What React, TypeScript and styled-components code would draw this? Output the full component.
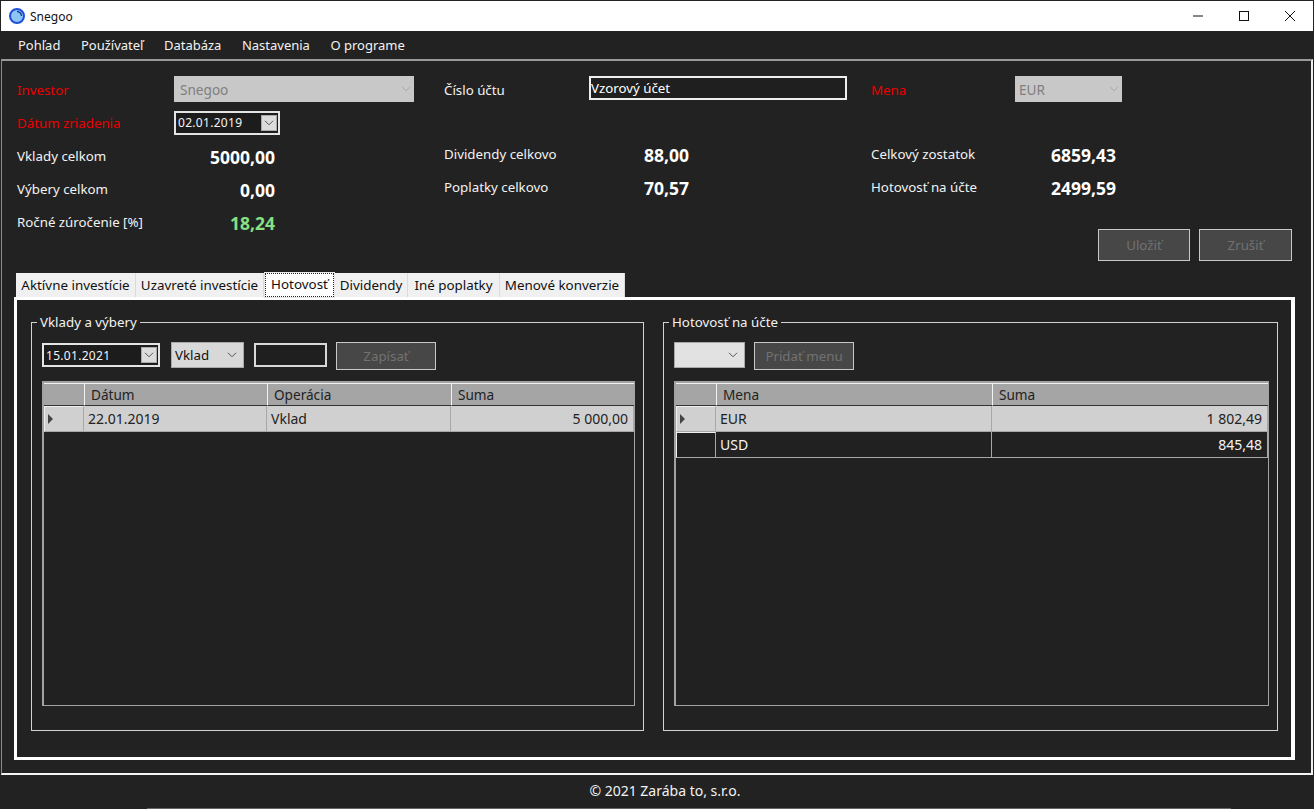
import React from "react";
import styled, { createGlobalStyle } from "styled-components";

const Global = createGlobalStyle`
  html, body { margin: 0; padding: 0; background: #222222; }
  body { font-family: "Noto Sans", "Open Sans", sans-serif; font-size: 13px; color: #f4f4f4; }
  * { box-sizing: border-box; }
`;

const Window = styled.div`
  width: 1314px; height: 809px; background: #222222; display: flex; flex-direction: column;
  padding-top: 1px; overflow: hidden; position: relative;
`;
const TitleBar = styled.div`
  height: 30px; margin: 0 1px; background: #fff; display: flex; align-items: center; flex: none;
`;
const AppIcon = styled.svg`width: 16px; height: 16px; margin-left: 8px; flex: none;`;
const AppTitle = styled.div`margin-left: 5px; font-size: 12px; color: #111; flex: 1;`;
const WinButton = styled.div`
  width: 46px; height: 30px; display: flex; align-items: center; justify-content: center; flex: none;
`;
const MenuBar = styled.div`
  height: 28px; flex: none; display: flex; align-items: center; gap: 20.5px; padding-left: 18px;
  padding-bottom: 1px;
`;
const MenuItem = styled.div`font-size: 13px; color: #f2f2f2; white-space: nowrap;`;

const Panel = styled.div`
  height: 716px; flex: none; margin: 0 1px; border-top: 2px solid #9a9a9a; border-left: 1px solid #8c8c8c;
  border-right: 2px solid #eeeeee; border-bottom: 2px solid #f4f4f4;
  padding: 12px 16px 0 0;
`;
const FormGrid = styled.div`
  display: grid; margin-left: 15px;
  grid-template-columns: 157px 270px 145px 282px 144px 107px;
  grid-auto-rows: 33px; align-items: center;
`;
const Label = styled.div<{ $red?: boolean; $up?: boolean }>`
  font-size: 13.3px; white-space: nowrap; color: ${p => (p.$red ? "#ea0000" : "#f2f2f2")};
  margin-top: ${p => (p.$up ? -3 : 0)}px;
`;
const Value = styled.div<{ $green?: boolean; $up?: boolean; $w?: number }>`
  width: ${p => p.$w ?? 101}px; text-align: right; font-size: 17.5px; font-weight: 700; line-height: 20px;
  color: ${p => (p.$green ? "#86e086" : "#ffffff")};
  margin-top: ${p => (p.$up ? -1 : 2)}px;
`;
const Spacer = styled.div``;
const DisabledSelect = styled.div<{ $w: number; $pad: number }>`
  width: ${p => p.$w}px; height: 26px; background: #c8c8c8; color: #7f7f7f; font-size: 13.6px;
  display: flex; align-items: center; justify-content: space-between; padding: 0 3px 0 ${p => p.$pad}px; margin-top: -1px;
`;
const TextBox = styled.div`
  width: 258px; height: 24px; border: 2px solid #eeeeee; background: #1f1f1f; color: #fff;
  font-size: 13.3px; line-height: 20px; padding-left: 0; margin-top: -3px;
`;
const DateBox = styled.div<{ $w: number }>`
  width: ${p => p.$w}px; height: 24px; border: 2px solid #e4e4e4; background: #1c1c1c;
  color: #f4f4f4; font-size: 12px; letter-spacing: 0.3px; display: flex; align-items: center;
  justify-content: space-between; padding: 0 1px 0 2px;
`;
const DateArrow = styled.div`
  width: 16px; height: 16px; background: #dcdcdc; display: flex; align-items: center; justify-content: center;
  border: 1px solid #aaa;
`;
const Actions = styled.div`
  display: flex; justify-content: flex-end; gap: 9px; margin: -9px 3px 0 0;
`;
const Action = styled.div<{ $w: number; $h: number }>`
  width: ${p => p.$w}px; height: ${p => p.$h}px; background: #474747; border: 1px solid #c8c8c8;
  color: #727272; font-size: 13.3px; display: flex; align-items: center; justify-content: center; flex: none;
`;
const TabStrip = styled.div`
  display: flex; align-items: flex-end; height: 25px; margin: 11px 0 0 14px; position: relative; z-index: 1;
`;
const Tab = styled.div<{ $active?: boolean; $w: number }>`
  width: ${p => p.$w}px; height: ${p => (p.$active ? 26 : 24)}px; background: ${p => (p.$active ? "#fff" : "#f0f0f0")};
  border-right: 1px solid #dadada; color: #111; font-size: 13.4px; white-space: nowrap;
  display: flex; align-items: center; justify-content: center;
  margin-bottom: ${p => (p.$active ? -1 : 0)}px;
  padding-bottom: ${p => (p.$active ? 3 : 0)}px;
  ${p => p.$active ? "outline: 1px dotted #222; outline-offset: -2px; border: 1px solid #e8e8e8;" : ""}
`;
const TabPage = styled.div`
  width: 1281px; height: 463px; margin-left: 12px; border: 3px solid #ffffff; border-right-width: 4px;
  padding: 13px 13px 0 14px; display: grid; grid-template-columns: 613px 615px; column-gap: 19px; align-items: start;
`;
const Group = styled.fieldset`
  margin: 0; height: 418px; border: 1px solid #d2d2d2; padding: 11px 8px 0 10px; min-width: 0;
`;
const Legend = styled.legend`
  font-size: 13.3px; color: #f2f2f2; line-height: 18px; padding: 0 3px; margin-left: -5px;
`;
const Toolbar = styled.div`
  display: flex; align-items: flex-start; height: 28px; margin-bottom: 11px;
`;
const CellSelect = styled.div<{ $w: number; $light?: boolean }>`
  width: ${p => p.$w}px; height: 26px; background: ${p => (p.$light ? "#e2e2e2" : "#d8d8d8")}; color: #111;
  border: 1px solid #a8a8a8; font-size: 13.3px; display: flex; align-items: center; justify-content: space-between;
  padding: 0 6px 0 3px; margin-right: 9px; flex: none;
`;
const SmallInput = styled.div`
  width: 73px; height: 24px; border: 2px solid #d8d8d8; margin: 1px 9px 0 1px; background: #1f1f1f; flex: none;
`;
const DateWrap = styled.div`margin: 1px 11px 0 0; flex: none;`;
const Table = styled.div`
  height: 325px; border: 2px solid #a2a2a2; border-width: 2px 1px 1px 2px; background: #212121;
`;
const Row = styled.div<{ $cols: string; $h: number }>`
  display: grid; grid-template-columns: ${p => p.$cols}; height: ${p => p.$h}px;
`;
const HeadCell = styled.div`
  background: #a5a5a5; color: #222; font-size: 13.6px; padding-left: 6px; display: flex; align-items: center;
  border-top: 1px solid #f2f2f2; border-left: 1px solid #f2f2f2; border-bottom: 1px solid #333;
  &:first-child { border-left: 0; }
`;
const Corner = styled(HeadCell)`padding: 0;`;
const RowHead = styled.div<{ $on?: boolean }>`
  background: ${p => (p.$on ? "#d0d0d0" : "#212121")}; border-right: 1px solid #a8a8a8; border-bottom: 1px solid #a8a8a8;
  border-left: 1px solid #eee; border-top: 1px solid #eee;
  display: flex; align-items: center; padding-left: 3px;
`;
const Arrow = styled.div`
  width: 0; height: 0; border-left: 5px solid #444; border-top: 5px solid transparent; border-bottom: 5px solid transparent;
`;
const Cell = styled.div<{ $on?: boolean; $right?: boolean }>`
  background: ${p => (p.$on ? "#d0d0d0" : "#212121")}; color: ${p => (p.$on ? "#222" : "#f4f4f4")}; font-size: 14px;
  border-right: 1px solid #a8a8a8; border-bottom: 1px solid #a8a8a8; display: flex; align-items: center;
  padding: 0 5px 0 4px; justify-content: ${p => (p.$right ? "flex-end" : "flex-start")};
`;
const Footer = styled.div`
  flex: 1; display: flex; align-items: center; justify-content: center; padding: 0 0 4px 16px;
  font-size: 14px; color: #f2f2f2;
`;
const BottomEdge = styled.div`
  position: absolute; left: 147px; bottom: 0; width: 1084px; height: 1px; background: #666;
`;

const Chevron = ({ color = "#555" }: { color?: string }) => (
  <svg width="10" height="6" viewBox="0 0 10 6" fill="none"><path d="M1 .8 5 4.8 9 .8" stroke={color} strokeWidth="1" /></svg>
);

const Data = ({ cols, heads, rows }: { cols: string; heads: string[]; rows: { c: string[]; on: boolean }[] }) => (
  <Table>
    <Row $cols={cols} $h={23}>
      <Corner />
      {heads.map(h => <HeadCell key={h}>{h}</HeadCell>)}
    </Row>
    {rows.map(r => (
      <Row key={r.c[0]} $cols={cols} $h={26}>
        <RowHead $on={r.on}>{r.on && <Arrow />}</RowHead>
        {r.c.map((v, i) => <Cell key={i} $on={r.on} $right={i === r.c.length - 1}>{v}</Cell>)}
      </Row>
    ))}
  </Table>
);

export default function App() {
  return (
    <Window>
      <Global />
      <TitleBar>
        <AppIcon viewBox="0 0 16 16">
          <circle cx="8" cy="8" r="7" fill="#8cc4f4" stroke="#1f4fd8" strokeWidth="2" />
          <path d="M8 3.5A4.5 4.5 0 0 1 12.5 8" stroke="#143a9c" strokeWidth="1.4" fill="none" />
        </AppIcon>
        <AppTitle>Snegoo</AppTitle>
        <WinButton><svg width="10" height="10" viewBox="0 0 10 10"><path d="M0 5h10" stroke="#111" /></svg></WinButton>
        <WinButton><svg width="10" height="10" viewBox="0 0 10 10"><rect x=".5" y=".5" width="9" height="9" fill="none" stroke="#111" /></svg></WinButton>
        <WinButton><svg width="10" height="10" viewBox="0 0 10 10"><path d="M0 0l10 10M10 0 0 10" stroke="#111" /></svg></WinButton>
      </TitleBar>
      <MenuBar>
        {["Pohľad", "Používateľ", "Databáza", "Nastavenia", "O programe"].map(m => <MenuItem key={m}>{m}</MenuItem>)}
      </MenuBar>
      <Panel>
        <FormGrid>
          <Label $red>Investor</Label>
          <DisabledSelect $w={240} $pad={6}>Snegoo<Chevron color="#a8a8a8" /></DisabledSelect>
          <Label>Číslo účtu</Label>
          <TextBox>Vzorový účet</TextBox>
          <Label $red>Mena</Label>
          <DisabledSelect $w={107} $pad={4}>EUR<Chevron color="#a8a8a8" /></DisabledSelect>

          <Label $red>Dátum zriadenia</Label>
          <DateBox $w={106}>02.01.2019<DateArrow><Chevron /></DateArrow></DateBox>
          <Spacer /><Spacer /><Spacer /><Spacer />

          <Label>Vklady celkom</Label>
          <Value>5000,00</Value>
          <Label $up>Dividendy celkovo</Label>
          <Value $up $w={100}>88,00</Value>
          <Label $up>Celkový zostatok</Label>
          <Value $up>6859,43</Value>

          <Label>Výbery celkom</Label>
          <Value>0,00</Value>
          <Label $up>Poplatky celkovo</Label>
          <Value $up $w={100}>70,57</Value>
          <Label $up>Hotovosť na účte</Label>
          <Value $up>2499,59</Value>

          <Label>Ročné zúročenie [%]</Label>
          <Value $green>18,24</Value>
        </FormGrid>
        <Actions>
          <Action $w={92} $h={32}>Uložiť</Action>
          <Action $w={93} $h={32}>Zrušiť</Action>
        </Actions>
        <TabStrip>
          <Tab $w={120}>Aktívne investície</Tab>
          <Tab $w={128}>Uzavreté investície</Tab>
          <Tab $w={71} $active>Hotovosť</Tab>
          <Tab $w={73}>Dividendy</Tab>
          <Tab $w={92}>Iné poplatky</Tab>
          <Tab $w={125}>Menové konverzie</Tab>
        </TabStrip>
        <TabPage>
          <Group>
            <Legend>Vklady a výbery</Legend>
            <Toolbar>
              <DateWrap><DateBox $w={118}>15.01.2021<DateArrow><Chevron /></DateArrow></DateBox></DateWrap>
              <CellSelect $w={73}>Vklad<Chevron /></CellSelect>
              <SmallInput />
              <Action $w={100} $h={28}>Zapísať</Action>
            </Toolbar>
            <Data
              cols="40px 183px 184px 1fr"
              heads={["Dátum", "Operácia", "Suma"]}
              rows={[{ c: ["22.01.2019", "Vklad", "5 000,00"], on: true }]}
            />
          </Group>
          <Group>
            <Legend>Hotovosť na účte</Legend>
            <Toolbar>
              <CellSelect $w={71} $light><span /><Chevron /></CellSelect>
              <Action $w={100} $h={28}>Pridať menu</Action>
            </Toolbar>
            <Data
              cols="40px 276px 1fr"
              heads={["Mena", "Suma"]}
              rows={[
                { c: ["EUR", "1 802,49"], on: true },
                { c: ["USD", "845,48"], on: false },
              ]}
            />
          </Group>
        </TabPage>
      </Panel>
      <Footer>© 2021 Zarába to, s.r.o.</Footer>
      <BottomEdge />
    </Window>
  );
}
